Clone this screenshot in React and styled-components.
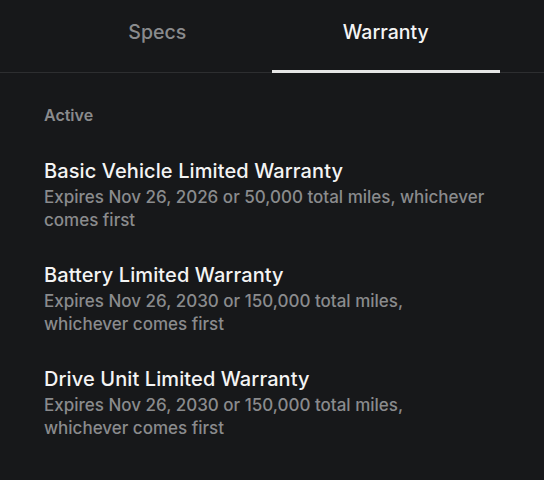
import React from "react";
import styled, { createGlobalStyle } from "styled-components";

const GlobalStyle = createGlobalStyle`
  html, body {
    margin: 0;
    padding: 0;
    background: #17181a;
  }
  body {
    font-family: Inter, "Noto Sans", "Liberation Sans", sans-serif;
    -webkit-font-smoothing: antialiased;
  }
`;

const Page = styled.div`
  width: 544px;
  height: 480px;
  background: #17181a;
  overflow: hidden;
`;

const TabBar = styled.div`
  display: flex;
  padding: 0 44px 0 43px;
  border-bottom: 1px solid #2d2e30;
`;

const Tab = styled.div`
  flex: 1;
  height: 72px;
  display: flex;
  align-items: center;
  justify-content: center;
  padding-bottom: 8px;
  box-sizing: border-box;
  font-size: 19.5px;
  font-weight: 500;
  color: ${(p) => (p.$active ? "#f4f4f4" : "#8a8b8d")};
  position: relative;
  &::after {
    content: "";
    display: ${(p) => (p.$active ? "block" : "none")};
    position: absolute;
    left: 0;
    right: 0;
    bottom: -1px;
    height: 3px;
    background: #e6e6e6;
  }
`;

const Content = styled.div`
  display: flex;
  flex-direction: column;
  gap: 30px;
  padding: 32px 56px 0 44px;
`;

const SectionLabel = styled.div`
  font-size: 16px;
  line-height: 20px;
  font-weight: 600;
  color: #8a8b8d;
  margin-bottom: 3px;
`;

const Item = styled.div`
  display: flex;
  flex-direction: column;
  gap: 2px;
`;

const ItemTitle = styled.div`
  font-size: 20px;
  line-height: 26px;
  font-weight: 500;
  letter-spacing: 0.1px;
  color: #f4f4f4;
`;

const ItemText = styled.div`
  font-size: 17px;
  line-height: 23px;
  font-weight: 500;
  color: #8a8b8d;
`;

const warranties = [
  {
    title: "Basic Vehicle Limited Warranty",
    text: "Expires Nov 26, 2026 or 50,000 total miles, whichever comes first",
  },
  {
    title: "Battery Limited Warranty",
    text: "Expires Nov 26, 2030 or 150,000 total miles, whichever comes first",
  },
  {
    title: "Drive Unit Limited Warranty",
    text: "Expires Nov 26, 2030 or 150,000 total miles, whichever comes first",
  },
];

const App = () => {
  return (
    <Page>
      <GlobalStyle />
      <TabBar>
        <Tab>Specs</Tab>
        <Tab $active>Warranty</Tab>
      </TabBar>
      <Content>
        <SectionLabel>Active</SectionLabel>
        {warranties.map((w) => (
          <Item key={w.title}>
            <ItemTitle>{w.title}</ItemTitle>
            <ItemText>{w.text}</ItemText>
          </Item>
        ))}
      </Content>
    </Page>
  );
};

export default App;
